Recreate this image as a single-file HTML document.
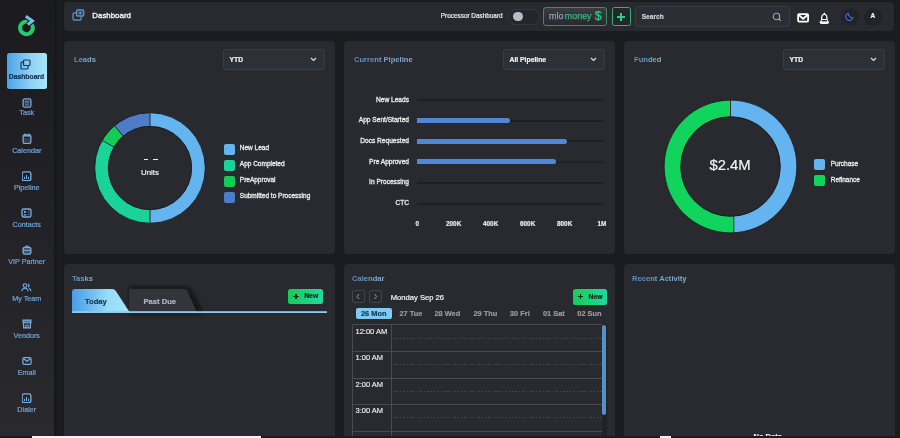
<!DOCTYPE html>
<html><head><meta charset="utf-8">
<style>
*{margin:0;padding:0;box-sizing:border-box}
html,body{width:900px;height:438px;overflow:hidden;background:#1b1c20;-webkit-font-smoothing:antialiased;-webkit-text-stroke-width:0.2px;font-family:"Liberation Sans",sans-serif;color:#e6e6e6}
.a{position:absolute}
#side{position:absolute;left:0;top:0;width:53.5px;height:438px;background:linear-gradient(#1b1b1f,#29292e)}
.nav{position:absolute;left:0;width:53.5px;text-align:center;color:#6ea6d8;font-size:7.2px;line-height:8px;white-space:nowrap}
.nav svg{display:block;margin:0 auto 2px}
.card{position:absolute;background:#292a2f;border-radius:4px}
.ttl{position:absolute;left:10px;top:14.7px;font-size:7.6px;font-weight:bold;color:transparent;line-height:8px;-webkit-text-stroke-width:0;background:linear-gradient(90deg,#5b8fc3,#8ab6d4);-webkit-background-clip:text;background-clip:text;white-space:nowrap}
.dd{position:absolute;width:101.6px;height:20.5px;border:1px solid #3b3d45;background:#2e3037;border-radius:2.5px}
.dd span{position:absolute;left:5.2px;top:5.6px;font-size:6.8px;font-weight:bold;color:#f2f2f2;line-height:8px}
.dd svg{position:absolute;right:7px;top:6.4px}
.lg{position:absolute;font-size:6.5px;color:#ececec;-webkit-text-stroke-width:0.3px;line-height:8px;white-space:nowrap}
.sq{position:absolute;width:11px;height:11px;border-radius:2px}
.pl{position:absolute;font-size:6.6px;color:#ececec;line-height:8px;text-align:right;width:60px;white-space:nowrap;-webkit-text-stroke-width:0.3px}
.trk{position:absolute;left:417px;width:185.5px;height:2px;background:#1f2024}
.bar{position:absolute;left:417px;height:5px;background:#4f88d6;border-radius:0 3px 3px 0}
.ax{position:absolute;top:219.5px;font-size:6.4px;font-weight:bold;color:#e8e8e8;line-height:8px;white-space:nowrap}
.day{position:absolute;top:309.5px;font-size:7.4px;font-weight:bold;color:#9a9a9e;line-height:8px;white-space:nowrap}
.tm{position:absolute;left:355.5px;font-size:7.5px;color:#f0f0f0;line-height:8px;white-space:nowrap;-webkit-text-stroke:0.15px #f0f0f0}
.hl{position:absolute;left:352.5px;width:249px;height:1px;background:#4a4b51}
.dl{position:absolute;left:392.6px;width:209px;height:1px;background:repeating-linear-gradient(90deg,#46474d 0 1.6px,transparent 1.6px 3.4px)}
</style></head><body><div style="position:absolute;left:0;top:0;width:900px;height:438px;will-change:transform">

<!-- sidebar -->
<div id="side"></div>
<div class="a" style="left:53.5px;top:0;width:3px;height:438px;background:#17181c"></div>
<svg class="a" style="left:14px;top:12px" width="28" height="28" viewBox="0 0 28 28">
  <path d="M17.85 12.5 A6.35 6.35 0 1 1 13.8 9.6" fill="none" stroke="#20cc6c" stroke-width="4"/>
  <path d="M11.8 4.2 L18.4 8.8 L13.9 12.6" fill="none" stroke="#17181c" stroke-width="5" stroke-linejoin="miter"/>
  <path d="M11.8 4.2 L18.4 8.8 L13.9 12.6" fill="none" stroke="#7db8e8" stroke-width="3.1" stroke-linejoin="miter"/>
</svg>
<div class="a" style="left:6.5px;top:53px;width:40px;height:35.5px;border-radius:2.5px;background:linear-gradient(90deg,#4aa2ea,#8fd2f5 60%,#a8e6f9)"></div>
<svg class="a" style="left:20px;top:59px" width="11" height="11" viewBox="0 0 11 11" fill="none" stroke="#1d3a52" stroke-width="1.2">
  <rect x="3.5" y="1" width="6.5" height="5.5" rx="1"/><path d="M3.5 3.2 H2 a1 1 0 0 0 -1 1 V9 a1 1 0 0 0 1 1 h5 a1 1 0 0 0 1 -1 V6.5"/>
</svg>
<div class="a" style="left:6.5px;top:72.5px;width:40px;text-align:center;font-size:6.8px;font-weight:bold;color:#10324f;line-height:8px">Dashboard</div>

<div class="a" style="left:21.75px;top:97.5px;line-height:0"><svg width="10" height="10" viewBox="0 0 10 10"><rect x="1.1" y="0.9" width="7.8" height="8.2" rx="1.6" fill="none" stroke="#79afe0" stroke-width="1.3"/><rect x="2.6" y="2.4" width="4.8" height="3.2" fill="#79afe0" opacity="0.55"/><path d="M2.8 6.9h4.4" stroke="#79afe0" stroke-width="0.9"/></svg></div>
<div class="nav" style="top:109.4px">Task</div>
<div class="a" style="left:21.75px;top:133.2px;line-height:0"><svg width="10" height="11" viewBox="0 0 10 11"><rect x="1.1" y="1.8" width="7.8" height="8.6" rx="1.6" fill="none" stroke="#79afe0" stroke-width="1.3"/><path d="M1.2 2.2h7.6v1.4H1.2z" fill="#79afe0"/><path d="M3 0.4v2.2M7 0.4v2.2" stroke="#79afe0" stroke-width="1.3"/><path d="M2.4 5.2h5.2v3.8H2.4z" fill="#79afe0" opacity="0.45"/><path d="M4.3 5v4.2M5.7 5v4.2M2.2 7.1h5.6" stroke="#1f2024" stroke-width="0.6"/></svg></div>
<div class="nav" style="top:146.6px">Calendar</div>
<div class="a" style="left:22px;top:171px;line-height:0"><svg width="10" height="10" viewBox="0 0 10 10"><rect x="0.15" y="0.9" width="8.7" height="8.8" rx="1.8" fill="none" stroke="#79afe0" stroke-width="1.3"/><path d="M2.5 8v-2.2M4.5 8v-4M6.5 8v-2.2" stroke="#79afe0" stroke-width="1"/></svg></div>
<div class="nav" style="top:183.9px">Pipeline</div>
<div class="a" style="left:21.25px;top:208.1px;line-height:0"><svg width="11" height="10" viewBox="0 0 11 10"><rect x="1" y="1" width="9" height="8" rx="1.4" fill="none" stroke="#79afe0" stroke-width="1.3"/><circle cx="3.9" cy="3.9" r="1.1" fill="#79afe0"/><path d="M2.3 7.5a1.6 1.6 0 0 1 3.2 0z" fill="#79afe0"/><path d="M6.7 3.2h1.8M6.7 5h1.8M6.7 6.8h1.8" stroke="#79afe0" stroke-width="0.7" opacity="0.8"/></svg></div>
<div class="nav" style="top:220.5px">Contacts</div>
<div class="a" style="left:21.75px;top:245.1px;line-height:0"><svg width="10" height="10" viewBox="0 0 10 10"><rect x="1.1" y="2.3" width="7.8" height="6.8" rx="1.6" fill="#79afe0" opacity="0.35"/><rect x="1.1" y="2.3" width="7.8" height="6.8" rx="1.6" fill="none" stroke="#79afe0" stroke-width="1.3"/><path d="M3.6 2.3V1.1h2.8v1.2" fill="none" stroke="#79afe0" stroke-width="1"/><path d="M1.5 5.3h7" stroke="#79afe0" stroke-width="1"/></svg></div>
<div class="nav" style="top:257.5px">VIP Partner</div>
<div class="a" style="left:21.25px;top:282.8px;line-height:0"><svg width="11" height="9" viewBox="0 0 11 9" fill="none" stroke="#79afe0" stroke-width="1.1"><circle cx="4" cy="2.6" r="1.8"/><path d="M0.9 8.3a3.1 3.1 0 0 1 6.2 0"/><path d="M6.9 0.9a1.8 1.8 0 0 1 0 3.4M8 5.2a3.1 3.1 0 0 1 1.9 3.1"/></svg></div>
<div class="nav" style="top:294.6px">My Team</div>
<div class="a" style="left:21.75px;top:319.09999999999997px;line-height:0"><svg width="10" height="10" viewBox="0 0 10 10"><path d="M1 1.1h8v2.6H1z" fill="#79afe0" opacity="0.6"/><path d="M1 1.1h8v2.6H1z" fill="none" stroke="#79afe0" stroke-width="1.1"/><path d="M1.6 3.7v5.2h6.8V3.7" fill="none" stroke="#79afe0" stroke-width="1.2"/><path d="M3.8 8.9V6h2.4v2.9" fill="none" stroke="#79afe0" stroke-width="1"/></svg></div>
<div class="nav" style="top:331.6px">Vendors</div>
<div class="a" style="left:21.75px;top:357.0px;line-height:0"><svg width="10" height="8" viewBox="0 0 10 8" fill="none" stroke="#79afe0" stroke-width="1.2"><rect x="0.9" y="0.7" width="8.2" height="6.6" rx="1.3"/><path d="M1.6 1.7l3.4 2.6 3.4-2.6"/></svg></div>
<div class="nav" style="top:368.6px">Email</div>
<div class="a" style="left:22px;top:393px;line-height:0"><svg width="10" height="10" viewBox="0 0 10 10"><rect x="0.15" y="0.9" width="8.7" height="8.8" rx="1.8" fill="none" stroke="#79afe0" stroke-width="1.3"/><path d="M2.5 8v-2.2M4.5 8v-4M6.5 8v-2.2" stroke="#79afe0" stroke-width="1"/></svg></div>
<div class="nav" style="top:405.8px">Dialer</div>

<!-- header -->
<div class="card" style="left:64px;top:2px;width:830px;height:28.5px"></div>
<svg class="a" style="left:72px;top:8.5px" width="13" height="12" viewBox="0 0 13 12" fill="none" stroke="#5b90c2" stroke-width="1.3">
  <rect x="4.4" y="1" width="7.4" height="6" rx="1.3" fill="#2f4a66"/><path d="M4.4 3.8H2.2a1.2 1.2 0 0 0 -1.2 1.2V9.8a1.2 1.2 0 0 0 1.2 1.2h5.8a1.2 1.2 0 0 0 1.2 -1.2V7"/><path d="M7.4 4l1.8 0" stroke="#8fc0e8" stroke-width="1.4"/>
</svg>
<div class="a" style="left:92.3px;top:12px;font-size:7.9px;color:#f2f2f2;line-height:8px;-webkit-text-stroke-width:0.35px">Dashboard</div>
<div class="a" style="left:440.8px;top:12px;font-size:6.4px;color:#ececec;line-height:8px;white-space:nowrap">Processor Dashboard</div>
<div class="a" style="left:507.5px;top:8.7px;width:32px;height:16px;border-radius:8px;background:#25262b;border:1px solid #36373d"></div>
<div class="a" style="left:513px;top:11.5px;width:9.5px;height:9.5px;border-radius:50%;background:#babac8"></div>
<div class="a" style="left:543.3px;top:6.7px;width:64px;height:19.2px;border-radius:3px;border:1px solid #3e8c66;background:linear-gradient(#3b3c41,#28292d)"></div>
<div class="a" style="left:549px;top:11.3px;font-size:9.6px;line-height:10px;white-space:nowrap;transform:scaleX(0.93);transform-origin:0 0;-webkit-text-stroke:0.25px currentColor"><span style="color:#8ea2c0">mlo</span><span style="color:#3db581;margin-left:1.5px">money</span></div>
<div class="a" style="left:594.8px;top:9px;font-size:12.5px;color:#2ccf86;line-height:14px">$</div>
<div class="a" style="left:612px;top:7px;width:19px;height:19px;border-radius:2.5px;border:1px solid #36b070;background:#22272a"></div>
<div class="a" style="left:617.2px;top:16.2px;width:8px;height:1.6px;background:#2ecf7e"></div>
<div class="a" style="left:620.4px;top:13px;width:1.6px;height:8px;background:#2ecf7e"></div>
<div class="a" style="left:635.3px;top:5.8px;width:155px;height:20.8px;border-radius:3px;border:1px solid #393b42;background:#2c2e35"></div>
<div class="a" style="left:641.7px;top:12.8px;font-size:6.6px;font-weight:bold;color:#d0d0d0;line-height:8px">Search</div>
<svg class="a" style="left:771.5px;top:11.6px" width="10" height="10" viewBox="0 0 10 10" fill="none" stroke="#a8a8ac" stroke-width="1.1"><circle cx="4.5" cy="4.5" r="3.2"/><path d="M6.9 6.9l2 2"/></svg>
<svg class="a" style="left:797px;top:13.3px" width="13" height="10" viewBox="0 0 13 10" fill="none" stroke="#fff" stroke-width="1.8"><rect x="1.1" y="1.1" width="10" height="7.5" rx="1"/><path d="M1.4 1.8l4.7 4 4.7-4"/></svg>
<svg class="a" style="left:819px;top:11.5px" width="11" height="13" viewBox="0 0 11 13"><path d="M5.3 0.3 L6.2 1.7 C8 2.3 8.6 4.2 8.6 6.5 V8 L10 10 C10 11.3 9.3 12 8.3 12 H2.3 C1.3 12 0.6 11.3 0.6 10 L2 8 V6.5 C2 4.2 2.6 2.3 4.4 1.7 Z" fill="#f4f4f4"/><path d="M5.3 3.1 C6.7 3.1 7.2 4.4 7.2 5.8 V7.1 H3.4 V5.8 C3.4 4.4 3.9 3.1 5.3 3.1Z" fill="#1d1e22"/><rect x="2.7" y="8" width="5.2" height="1.4" fill="#2a2b30"/></svg>
<div class="a" style="left:840.5px;top:7.5px;width:18px;height:18px;border-radius:50%;background:#222328"></div>
<svg class="a" style="left:845px;top:12px" width="9" height="9" viewBox="0 0 9 9"><path d="M3.2 1.2A3.7 3.7 0 1 0 8 5.9 A4.6 4.6 0 0 1 3.2 1.2z" fill="#101a34" stroke="#4677d0" stroke-width="1.1" stroke-linejoin="round"/></svg>
<div class="a" style="left:863.8px;top:7.5px;width:18px;height:18px;border-radius:50%;background:#222328"></div>
<div class="a" style="left:863.8px;top:12px;width:18px;text-align:center;font-size:6.5px;font-weight:bold;color:#f4f4f4;line-height:8px">A</div>

<!-- Leads -->
<div class="card" style="left:64px;top:41px;width:271px;height:212.5px">
  <div class="ttl">Leads</div>
</div>
<div class="dd" style="left:223.3px;top:49.3px"><span>YTD</span><svg width="7" height="5" viewBox="0 0 7 5" fill="none" stroke="#e0e0e0" stroke-width="1.2"><path d="M1 1l2.5 2.5L6 1"/></svg></div>
<svg class="a" style="left:94px;top:112px" width="112" height="112" viewBox="-56 -56 112 112">
  <g fill="none" stroke-width="13.5">
    <circle r="48.5" stroke="#63b4ef" stroke-dasharray="152.4 1000" transform="rotate(-90)"/>
    <circle r="48.5" stroke="#1bd399" stroke-dasharray="101.6 1000" transform="rotate(90)"/>
    <circle r="48.5" stroke="#12cc57" stroke-dasharray="16.9 1000" transform="rotate(210)"/>
    <circle r="48.5" stroke="#4d7dc6" stroke-dasharray="33.9 1000" transform="rotate(230)"/>
  </g>
  <g fill="none" stroke="#18191d" stroke-width="0.9"><circle r="55.3"/><circle r="41.7"/></g>
  <g stroke="#292a2f" stroke-width="1">
    <path d="M0 -56V-41"/><path d="M0 56V41"/>
    <path d="M-48.5 -28 L-35.5 -20.5"/><path d="M-36 -42.9 L-26.4 -31.4"/>
  </g>
</svg>
<div class="a" style="left:143.5px;top:158.6px;width:4.6px;height:1.5px;background:#ececec"></div><div class="a" style="left:153px;top:158.6px;width:4.6px;height:1.5px;background:#ececec"></div>
<div class="a" style="left:130px;top:168.5px;width:40px;text-align:center;font-size:7.9px;color:#f0f0f0;line-height:8px">Units</div>
<div class="sq" style="left:224px;top:144px;background:#63b4ef"></div>
<div class="sq" style="left:224px;top:160px;background:#1bd399"></div>
<div class="sq" style="left:224px;top:176px;background:#12cc57"></div>
<div class="sq" style="left:224px;top:192px;background:#4d7dc6"></div>
<div class="lg" style="left:239.8px;top:144px">New Lead</div>
<div class="lg" style="left:239.8px;top:160px">App Completed</div>
<div class="lg" style="left:239.8px;top:176px">PreApproval</div>
<div class="lg" style="left:239.8px;top:192px">Submitted to Processing</div>

<!-- Pipeline -->
<div class="card" style="left:344px;top:41px;width:271px;height:212.5px">
  <div class="ttl">Current Pipeline</div>
</div>
<div class="dd" style="left:503.3px;top:49.3px"><span>All Pipeline</span><svg width="7" height="5" viewBox="0 0 7 5" fill="none" stroke="#e0e0e0" stroke-width="1.2"><path d="M1 1l2.5 2.5L6 1"/></svg></div>
<div class="trk" style="top:99px"></div>
<div class="trk" style="top:119.7px"></div>
<div class="trk" style="top:140.4px"></div>
<div class="trk" style="top:161.1px"></div>
<div class="trk" style="top:181.8px"></div>
<div class="trk" style="top:202.5px"></div>
<div class="bar" style="top:117.8px;width:92.5px"></div>
<div class="bar" style="top:138.5px;width:149.5px"></div>
<div class="bar" style="top:159.2px;width:138.7px"></div>
<div class="pl" style="left:349px;top:95.5px">New Leads</div>
<div class="pl" style="left:349px;top:116.2px">App Sent/Started</div>
<div class="pl" style="left:349px;top:136.9px">Docs Requested</div>
<div class="pl" style="left:349px;top:157.6px">Pre Approved</div>
<div class="pl" style="left:349px;top:178.3px">In Processing</div>
<div class="pl" style="left:349px;top:199px">CTC</div>
<div class="ax" style="left:415.5px">0</div>
<div class="ax" style="left:446px">200K</div>
<div class="ax" style="left:483px">400K</div>
<div class="ax" style="left:520px">600K</div>
<div class="ax" style="left:557px">800K</div>
<div class="ax" style="left:597.5px">1M</div>

<!-- Funded -->
<div class="card" style="left:624px;top:41px;width:270.5px;height:212.5px">
  <div class="ttl">Funded</div>
</div>
<div class="dd" style="left:783.3px;top:49.3px"><span>YTD</span><svg width="7" height="5" viewBox="0 0 7 5" fill="none" stroke="#e0e0e0" stroke-width="1.2"><path d="M1 1l2.5 2.5L6 1"/></svg></div>
<svg class="a" style="left:663px;top:99px" width="135" height="135" viewBox="-67.5 -67.5 135 135">
  <g fill="none" stroke-width="16.6">
    <circle r="58.1" stroke="#63b4ef" stroke-dasharray="179.5 1000" transform="rotate(-90)"/>
    <circle r="58.1" stroke="#10d45c" stroke-dasharray="185.6 1000" transform="rotate(87)"/>
  </g>
  <g fill="none" stroke="#18191d" stroke-width="0.9"><circle r="66.4"/><circle r="49.8"/></g>
  <g stroke="#292a2f" stroke-width="1"><path d="M0 -67V-49.5"/><path d="M3.3 67V49.5"/></g>
</svg>
<div class="a" style="left:690px;top:157px;width:80px;text-align:center;font-size:14.8px;color:#f4f4f4;line-height:16px">$2.4M</div>
<div class="sq" style="left:814.2px;top:159px;background:#63b4ef"></div>
<div class="sq" style="left:814.2px;top:175px;background:#10d45c"></div>
<div class="lg" style="left:830.7px;top:159.5px">Purchase</div>
<div class="lg" style="left:830.7px;top:175.5px">Refinance</div>

<!-- Tasks -->
<div class="card" style="left:64px;top:264px;width:271px;height:180px">
  <div class="ttl" style="left:8px;top:11px">Tasks</div>
</div>
<svg class="a" style="left:64px;top:284px" width="271" height="34" viewBox="0 0 271 34">
  <defs>
    <linearGradient id="tg" x1="0" x2="1"><stop offset="0" stop-color="#4a9ce8"/><stop offset="0.35" stop-color="#72bdf0"/><stop offset="0.6" stop-color="#95dcf6"/><stop offset="1" stop-color="#a4e6f8"/></linearGradient>
    <filter id="sh" x="-20%" y="-40%" width="140%" height="180%"><feGaussianBlur stdDeviation="2.5"/></filter>
  </defs>
  <path d="M66 4 H121 Q125 4 127 8 L138 29 H66z" fill="#0c0d10" opacity="0.95" filter="url(#sh)"/>
  <path d="M65 8 Q65 5 68 5 H119.5 Q122.5 5 124 8 L133 28 H65z" fill="#34353b"/>
  <path d="M8 8 Q8 5 11 5 H48 Q51 5 52.5 8 L65.5 28 H8z" fill="url(#tg)"/>
  <rect x="8" y="27.2" width="255" height="2" fill="#92cbea"/>
  <rect x="8" y="29.2" width="255" height="1" fill="#15161a" opacity="0.7"/>
</svg>
<div class="a" style="left:85px;top:297.6px;font-size:7.6px;font-weight:bold;color:#1b3752;line-height:8px">Today</div>
<div class="a" style="left:143.5px;top:297.8px;font-size:7.6px;font-weight:bold;color:#b4b4bc;line-height:8px">Past Due</div>
<div class="a" style="left:288px;top:289px;width:35px;height:14.7px;border-radius:2.5px;background:linear-gradient(90deg,#17cc58,#20d99a)"></div>
<div class="a" style="left:293.4px;top:295.6px;width:5.2px;height:1.2px;background:#0f2d1c"></div><div class="a" style="left:295.4px;top:293.6px;width:1.2px;height:5.2px;background:#0f2d1c"></div>
<div class="a" style="left:304.2px;top:292px;font-size:6.8px;font-weight:bold;color:#0c2a18;line-height:8px">New</div>

<!-- Calendar -->
<div class="card" style="left:344px;top:264px;width:271px;height:180px">
  <div class="ttl" style="left:8px;top:11px">Calendar</div>
</div>
<div class="a" style="left:352.3px;top:289.5px;width:12.5px;height:13px;border-radius:2px;border:1px solid #44454b"></div>
<div class="a" style="left:369.2px;top:289.5px;width:12.5px;height:13px;border-radius:2px;border:1px solid #44454b"></div>
<svg class="a" style="left:352.3px;top:289.5px" width="31" height="13" viewBox="0 0 31 13" fill="none" stroke="#9a9aa0" stroke-width="1"><path d="M7.2 4l-2.2 2.5 2.2 2.5M22.5 4l2.2 2.5-2.2 2.5"/></svg>
<div class="a" style="left:390.8px;top:293.5px;font-size:7.6px;color:#f2f2f2;line-height:8px;white-space:nowrap">Monday Sep 26</div>
<div class="a" style="left:572.7px;top:289.4px;width:34.5px;height:15.5px;border-radius:2.5px;background:linear-gradient(90deg,#17cc58,#20d99a)"></div>
<div class="a" style="left:577.9px;top:296.2px;width:5.2px;height:1.2px;background:#0f2d1c"></div><div class="a" style="left:579.9px;top:294.2px;width:1.2px;height:5.2px;background:#0f2d1c"></div>
<div class="a" style="left:588.5px;top:293px;font-size:6.8px;font-weight:bold;color:#0c2a18;line-height:8px">New</div>
<div class="a" style="left:355.8px;top:308px;width:36.2px;height:10.6px;border-radius:2px;background:#7dcbf2"></div>
<div class="day" style="left:361px;top:309.5px;color:#1b3550">26 Mon</div>
<div class="day" style="left:399.5px">27 Tue</div>
<div class="day" style="left:434.5px">28 Wed</div>
<div class="day" style="left:473.5px">29 Thu</div>
<div class="day" style="left:510px">30 Fri</div>
<div class="day" style="left:543px">01 Sat</div>
<div class="day" style="left:577.3px">02 Sun</div>
<div class="a" style="left:352px;top:324px;width:250px;height:120px;border:1px solid #4a4b51;border-right:none;border-bottom:none;border-radius:2px 0 0 0"></div>
<div class="a" style="left:391.3px;top:324px;width:1px;height:120px;background:#4a4b51"></div>
<div class="hl" style="top:351px"></div>
<div class="hl" style="top:377.6px"></div>
<div class="hl" style="top:404.2px"></div>
<div class="hl" style="top:430.8px"></div>
<div class="dl" style="top:337.5px"></div>
<div class="dl" style="top:364.2px"></div>
<div class="dl" style="top:390.8px"></div>
<div class="dl" style="top:417.4px"></div>
<div class="a" style="left:602px;top:324px;width:4.5px;height:120px;background:#202125"></div>
<div class="a" style="left:602px;top:324.6px;width:4.4px;height:90.6px;border-radius:2.2px;background:#5590c6"></div>
<div class="tm" style="top:327.5px">12:00 AM</div>
<div class="tm" style="top:354.1px">1:00 AM</div>
<div class="tm" style="top:380.7px">2:00 AM</div>
<div class="tm" style="top:407.3px">3:00 AM</div>
<div class="tm" style="top:434.9px">4:00 AM</div>

<!-- Recent Activity -->
<div class="card" style="left:624px;top:264px;width:270.5px;height:180px">
  <div class="ttl" style="left:8px;top:11px">Recent Activity</div>
</div>
<div class="a" style="left:753.5px;top:432.8px;font-size:7.5px;font-weight:bold;color:#f2f2f2;line-height:8px">No Data</div>

<!-- bottom bar -->
<div class="a" style="left:0;top:435.6px;width:900px;height:3px;background:#1b1c20"></div>
<div class="a" style="left:31.8px;top:435.6px;width:229px;height:3px;background:#f4f4f4"></div>
<div class="a" style="left:660px;top:435.6px;width:11px;height:3px;background:#f0f0f0"></div>
</div></body></html>
